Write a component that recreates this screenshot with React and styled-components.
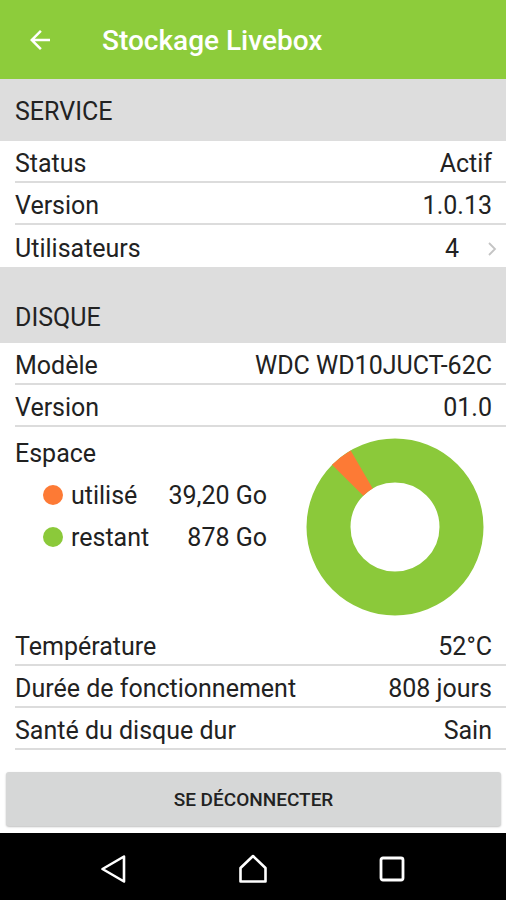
import React from 'react';
import styled, { createGlobalStyle } from 'styled-components';

const GlobalStyle = createGlobalStyle`
  html, body {
    margin: 0;
    padding: 0;
    background: #ffffff;
  }
  body {
    font-family: Roboto, "Noto Sans", "Liberation Sans", sans-serif;
    color: #212121;
  }
`;

const Screen = styled.div`
  width: 506px;
  height: 900px;
  display: flex;
  flex-direction: column;
  background: #ffffff;
  overflow: hidden;
`;

const Toolbar = styled.header`
  height: 79px;
  flex-shrink: 0;
  background: #8dcc3b;
  display: flex;
  align-items: center;
  padding-left: 25px;
  box-sizing: border-box;
`;

const BackButton = styled.div`
  width: 30px;
  height: 30px;
  display: flex;
  color: #ffffff;
`;

const Title = styled.h1`
  margin: 2px 0 0 47px;
  font-size: 28px;
  font-weight: 500;
  color: #ffffff;
`;

const SectionHeader = styled.div`
  height: ${(p) => p.$height}px;
  box-sizing: border-box;
  background: #dddddd;
  display: flex;
  align-items: center;
  padding: ${(p) => p.$offset}px 15px 0;
  font-size: 25px;
  color: #222222;
`;

const Row = styled.div`
  height: 42px;
  box-sizing: border-box;
  margin-left: 15px;
  padding: 5px 14px 0 0;
  display: flex;
  align-items: center;
  justify-content: space-between;
  font-size: 25px;
  color: #222222;
  border-bottom: ${(p) => (p.$divider ? '2px solid #dcdcdc' : 'none')};
`;

const Value = styled.span`
  display: flex;
  align-items: center;
  gap: 28px;
`;

const Chevron = styled.svg`
  width: 10px;
  height: 16px;
  margin-right: -5px;
`;

const SpaceBlock = styled.div`
  height: 197px;
  display: flex;
  justify-content: space-between;
`;

const SpaceLegend = styled.div`
  padding: 5px 0 0 15px;
`;

const SpaceTitle = styled.div`
  height: 42px;
  display: flex;
  align-items: center;
  font-size: 25px;
`;

const LegendGrid = styled.div`
  margin-left: 28px;
  width: 224px;
  display: grid;
  grid-template-columns: 20px 1fr auto;
  grid-auto-rows: 42px;
  column-gap: 8px;
  align-items: center;
  font-size: 25px;
`;

const Dot = styled.span`
  width: 20px;
  height: 20px;
  border-radius: 50%;
  background: ${(p) => p.$color};
`;

const Amount = styled.span`
  text-align: right;
`;

const Donut = styled.svg`
  width: 178px;
  height: 178px;
  margin: 11px 22px 0 0;
`;

const LogoutButton = styled.button`
  margin: 22px 5px 6px 6px;
  height: 54px;
  flex-shrink: 0;
  border: none;
  border-radius: 3px;
  background: #d6d7d7;
  box-shadow: 0 1px 2px rgba(0, 0, 0, 0.25);
  font-family: Roboto, "Noto Sans", sans-serif;
  font-size: 19px;
  font-weight: 500;
  color: #222222;
`;

const NavBar = styled.nav`
  margin-top: auto;
  height: 67px;
  flex-shrink: 0;
  background: #000000;
  display: flex;
  align-items: center;
  justify-content: center;
  gap: 107px;
  padding-top: 5px;
  box-sizing: border-box;
`;

const NavIcon = styled.svg`
  width: 32px;
  height: 32px;
`;

const GREEN = '#8bc93a';
const ORANGE = '#fd7a35';

const disk = { used: 39.2, free: 878 };

const SpaceChart = ({ used, free }) => {
  const r = 66.5;
  const c = 2 * Math.PI * r;
  const share = used / (used + free);
  const len = share * c;
  // orange slice ends 30deg left of the top
  const start = -30 - share * 360 - 90;
  return (
    <Donut viewBox="0 0 178 178">
      <circle cx="89" cy="89" r={r} fill="none" stroke={GREEN} strokeWidth="44" />
      <circle
        cx="89"
        cy="89"
        r={r}
        fill="none"
        stroke={ORANGE}
        strokeWidth="44"
        strokeDasharray={`${len} ${c}`}
        transform={`rotate(${start} 89 89)`}
      />
    </Donut>
  );
};

const App = () => (
  <Screen>
    <GlobalStyle />
    <Toolbar>
      <BackButton>
        <svg viewBox="0 0 24 24" width="30" height="30" fill="currentColor">
          <path d="M20 11H7.83l5.59-5.59L12 4l-8 8 8 8 1.41-1.41L7.83 13H20v-2z" />
        </svg>
      </BackButton>
      <Title>Stockage Livebox</Title>
    </Toolbar>

    <SectionHeader $height={62} $offset={2}>SERVICE</SectionHeader>
    <Row $divider>
      <span>Status</span>
      <span>Actif</span>
    </Row>
    <Row $divider>
      <span>Version</span>
      <span>1.0.13</span>
    </Row>
    <Row>
      <span>Utilisateurs</span>
      <Value>
        4
        <Chevron viewBox="0 0 10 16">
          <path d="M2 2l6 6-6 6" fill="none" stroke="#c4c4c4" strokeWidth="1.8" />
        </Chevron>
      </Value>
    </Row>

    <SectionHeader $height={76} $offset={24}>DISQUE</SectionHeader>
    <Row $divider>
      <span>Modèle</span>
      <span>WDC WD10JUCT-62C</span>
    </Row>
    <Row $divider>
      <span>Version</span>
      <span>01.0</span>
    </Row>
    <SpaceBlock>
      <SpaceLegend>
        <SpaceTitle>Espace</SpaceTitle>
        <LegendGrid>
          <Dot $color={ORANGE} />
          <span>utilisé</span>
          <Amount>39,20 Go</Amount>
          <Dot $color={GREEN} />
          <span>restant</span>
          <Amount>878 Go</Amount>
        </LegendGrid>
      </SpaceLegend>
      <SpaceChart used={disk.used} free={disk.free} />
    </SpaceBlock>
    <Row $divider>
      <span>Température</span>
      <span>52°C</span>
    </Row>
    <Row $divider>
      <span>Durée de fonctionnement</span>
      <span>808 jours</span>
    </Row>
    <Row $divider>
      <span>Santé du disque dur</span>
      <span>Sain</span>
    </Row>

    <LogoutButton>SE DÉCONNECTER</LogoutButton>

    <NavBar>
      <NavIcon viewBox="0 0 32 32">
        <path d="M26 3.5L4.5 16 26 28.5z" fill="none" stroke="#fff" strokeWidth="2.6" strokeLinejoin="round" />
      </NavIcon>
      <NavIcon viewBox="0 0 32 32">
        <path d="M16 3L3.5 15v13.5h25V15z" fill="none" stroke="#fff" strokeWidth="2.6" strokeLinejoin="round" />
      </NavIcon>
      <NavIcon viewBox="0 0 32 32">
        <rect x="5" y="5" width="22" height="22" rx="2" fill="none" stroke="#fff" strokeWidth="2.8" />
      </NavIcon>
    </NavBar>
  </Screen>
);

export default App;
